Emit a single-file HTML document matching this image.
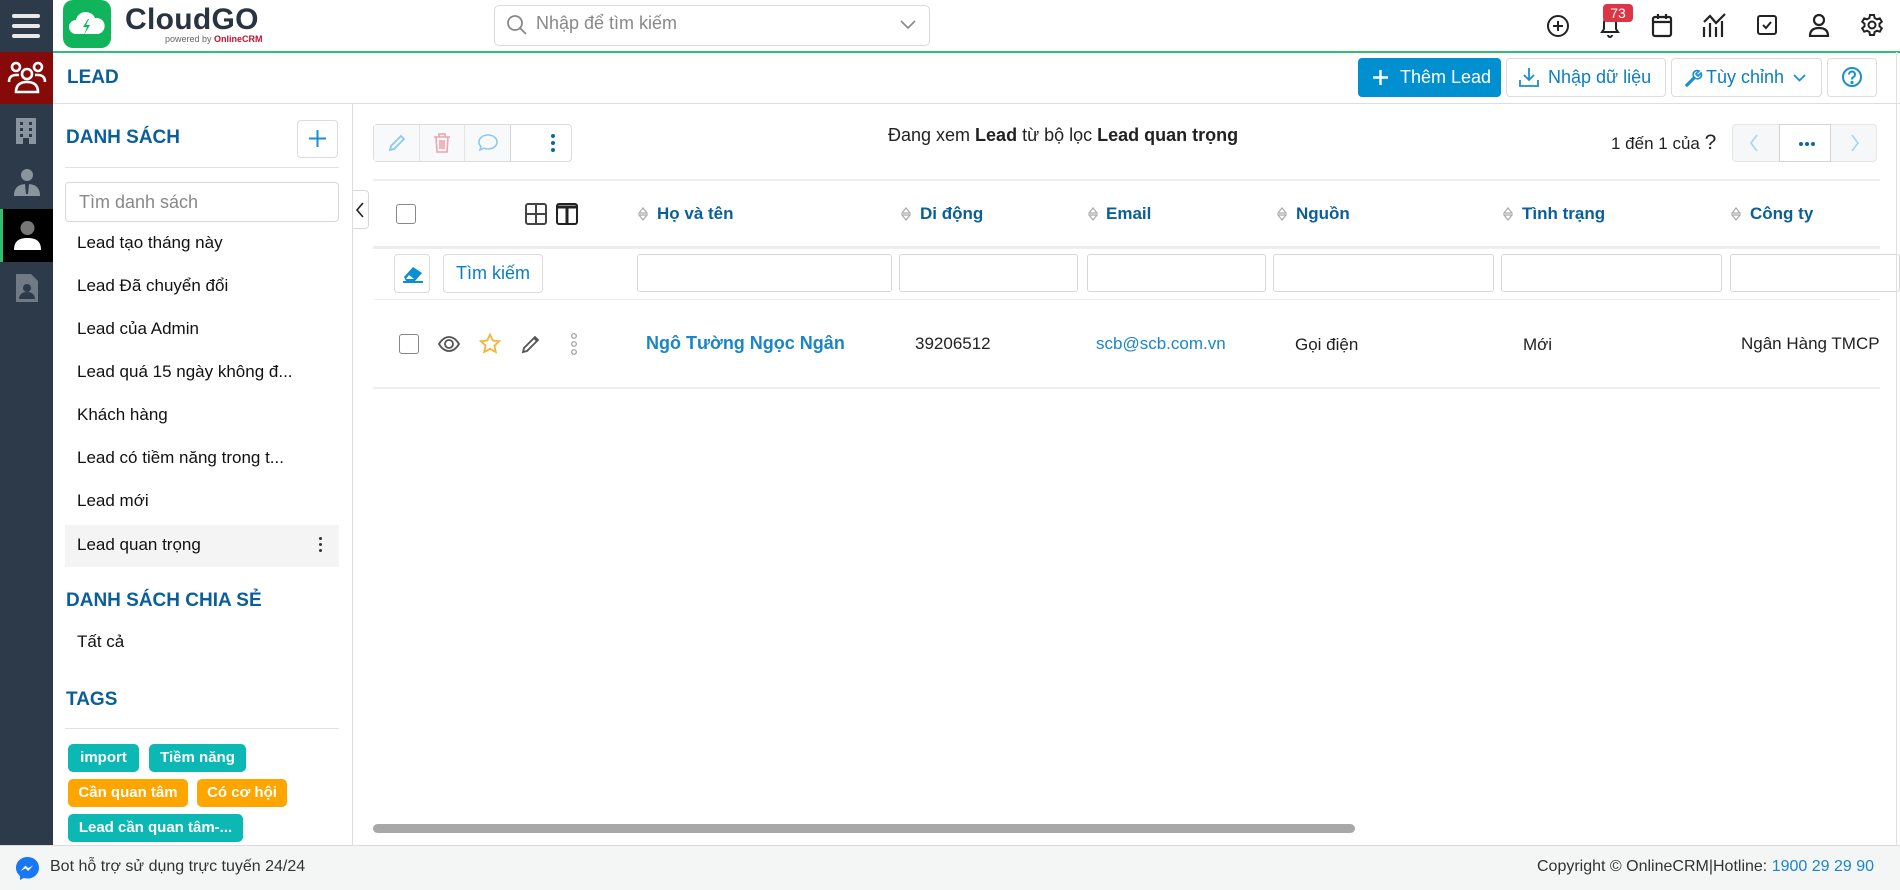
<!DOCTYPE html>
<html><head><meta charset="utf-8"><style>
*{box-sizing:border-box;margin:0;padding:0}
body{width:1900px;height:890px;position:relative;overflow:hidden;background:#fff;font-family:"Liberation Sans","DejaVu Sans",sans-serif;color:#222;font-size:17px}
.a{position:absolute}
.blue{color:#0b6aa2}
.rail{left:0;top:0;width:53px;height:845px;background:#2c3a4a}
.btn{position:absolute;border:1px solid #dcdcdc;border-radius:4px;background:#fff}
.li{position:absolute;left:77px;font-size:17px;color:#111}
.hd{position:absolute;top:204px;font-size:17px;color:#0b5f99;font-weight:bold}
.inp{position:absolute;top:254px;height:38px;border:1px solid #d8d8d8;border-radius:3px}
.tag{position:absolute;height:28px;border-radius:5px;color:#fff;font-weight:bold;font-size:15px;line-height:28px;text-align:center;white-space:nowrap;overflow:hidden}
.hl{position:absolute;height:2px;background:#eceeef}
</style></head><body>
<!-- rail -->
<div class="a rail"></div>
<div class="a" style="left:12px;top:14px;width:28px;height:4px;background:#e8e8e8;border-radius:2px"></div>
<div class="a" style="left:12px;top:24px;width:28px;height:4px;background:#e8e8e8;border-radius:2px"></div>
<div class="a" style="left:12px;top:34px;width:28px;height:4px;background:#e8e8e8;border-radius:2px"></div>
<div class="a" style="left:0;top:52px;width:53px;height:52px;background:#870a0a"></div>
<svg class="a" style="left:7px;top:60px" width="40" height="36" viewBox="0 0 40 36" fill="none" stroke="#fff" stroke-width="2.6"><circle cx="9" cy="7" r="4"/><circle cx="31" cy="7" r="4"/><circle cx="20" cy="14" r="5"/><path d="M2 22c0-5 3-7 7-7h3M38 22c0-5-3-7-7-7h-3M9 32c0-7 4-10 11-10s11 3 11 10z"/></svg>
<svg class="a" style="left:14px;top:116px" width="24" height="28" viewBox="0 0 24 28"><path d="M2 2h20v26h-7v-6h-6v6H2z" fill="#8a949e"/><g fill="#2c3a4a"><rect x="6" y="6" width="3" height="3"/><rect x="15" y="6" width="3" height="3"/><rect x="6" y="12" width="3" height="3"/><rect x="15" y="12" width="3" height="3"/><rect x="6" y="18" width="3" height="3"/><rect x="15" y="18" width="3" height="3"/></g></svg>
<svg class="a" style="left:13px;top:168px" width="28" height="28" viewBox="0 0 28 28"><circle cx="14" cy="7" r="6" fill="#8a949e"/><path d="M1 28c0-9 5-12 13-12s13 3 13 12z" fill="#8a949e"/><path d="M12 16h4l-1 10h-2z" fill="#2c3a4a"/></svg>
<div class="a" style="left:0;top:209px;width:53px;height:53px;background:#000"></div>
<div class="a" style="left:0;top:209px;width:3px;height:53px;background:#2fbf71"></div>
<svg class="a" style="left:14px;top:220px" width="27" height="30" viewBox="0 0 27 30"><circle cx="13.5" cy="8" r="7" fill="#777"/><path d="M0 30c0-9 5-12 13.5-12S27 21 27 30z" fill="#fff"/></svg>
<svg class="a" style="left:16px;top:274px" width="22" height="28" viewBox="0 0 22 28"><path d="M0 0h15l7 7v21H0z" fill="#6f7a85"/><circle cx="11" cy="14" r="4" fill="#2c3a4a"/><path d="M3 25c0-5 4-7 8-7s8 2 8 7z" fill="#2c3a4a"/></svg>

<!-- top bar -->
<div class="a" style="left:53px;top:51px;width:1847px;height:2px;background:#2fbf71"></div>
<div class="a" style="left:63px;top:0;width:48px;height:48px;background:#10b55b;border-radius:10px"></div>
<svg class="a" style="left:68px;top:10px" width="38" height="28" viewBox="0 0 38 28"><path d="M8 24a7 7 0 0 1 0-14 10 10 0 0 1 19-2 8 8 0 0 1 3 16z" fill="#fff"/><path d="M20 9l-5 8h4l-3 8 6-10h-4l3-6z" fill="#10b55b"/></svg>
<div class="a" style="left:125px;top:3px;font-size:30px;font-weight:bold;color:#2a3440;letter-spacing:0.3px">CloudGO</div>
<div class="a" style="left:165px;top:34px;font-size:9px;color:#666">powered by <b style="color:#c8102e">OnlineCRM</b></div>
<div class="a" style="left:494px;top:5px;width:436px;height:41px;border:1px solid #dadada;border-radius:5px"></div>
<svg class="a" style="left:506px;top:14px" width="22" height="22" viewBox="0 0 22 22" fill="none" stroke="#888" stroke-width="1.8"><circle cx="9" cy="9" r="7"/><path d="M14 14l6 6"/></svg>
<div class="a" style="left:536px;top:13px;font-size:18px;color:#888">Nhập để tìm kiếm</div>
<svg class="a" style="left:900px;top:20px" width="16" height="10" viewBox="0 0 16 10" fill="none" stroke="#888" stroke-width="1.6"><path d="M1 1l7 7 7-7"/></svg>
<!-- top icons -->
<svg class="a" style="left:1546px;top:14px" width="24" height="24" viewBox="0 0 24 24" fill="none" stroke="#222" stroke-width="2"><circle cx="12" cy="12" r="10"/><path d="M12 7v10M7 12h10"/></svg>
<svg class="a" style="left:1598px;top:13px" width="24" height="26" viewBox="0 0 24 26" fill="none" stroke="#222" stroke-width="2"><path d="M4 19h16l-2-3v-6a6 6 0 0 0-12 0v6zM10 22a2 2 0 0 0 4 0"/></svg>
<div class="a" style="left:1603px;top:4px;width:30px;height:18px;background:#dc3545;border-radius:4px;color:#fff;font-size:14px;line-height:18px;text-align:center">73</div>
<svg class="a" style="left:1651px;top:13px" width="22" height="25" viewBox="0 0 22 25" fill="none" stroke="#222" stroke-width="2.2"><rect x="2" y="4" width="18" height="19" rx="2"/><path d="M2 9h18M7 1v5M15 1v5"/></svg>
<svg class="a" style="left:1702px;top:12px" width="26" height="26" viewBox="0 0 26 26" fill="none" stroke="#222" stroke-width="2.2"><path d="M2 25V15M8 25V11M14 25V15M20 25V9M2 10l6-6 6 7 9-9"/></svg>
<svg class="a" style="left:1756px;top:14px" width="22" height="22" viewBox="0 0 22 22" fill="none" stroke="#222" stroke-width="2"><rect x="2" y="2" width="18" height="18" rx="2"/><path d="M7 11l3 3 5-6"/></svg>
<svg class="a" style="left:1808px;top:13px" width="22" height="24" viewBox="0 0 22 24" fill="none" stroke="#222" stroke-width="2.2"><circle cx="11" cy="7" r="5"/><path d="M2 23c0-6 4-8 9-8s9 2 9 8z"/></svg>
<svg class="a" style="left:1860px;top:13px" width="24" height="24" viewBox="0 0 24 24" fill="none" stroke="#222" stroke-width="2"><circle cx="12" cy="12" r="3.5"/><path d="M10 2h4l.6 3 2.3 1.3 2.9-1 2 3.4-2.3 2v2.6l2.3 2-2 3.4-2.9-1-2.3 1.3-.6 3h-4l-.6-3-2.3-1.3-2.9 1-2-3.4 2.3-2v-2.6l-2.3-2 2-3.4 2.9 1L9.4 5z"/></svg>

<!-- title row -->
<div class="a blue" style="left:67px;top:67px;font-size:19px;font-weight:bold;color:#0b5f99">LEAD</div>
<div class="a" style="left:1358px;top:58px;width:143px;height:39px;background:#0090d0;border-radius:4px;color:#fff;font-size:18px;line-height:39px;padding-left:42px">Thêm Lead</div>
<svg class="a" style="left:1372px;top:69px" width="17" height="17" viewBox="0 0 17 17" stroke="#fff" stroke-width="2.4"><path d="M8.5 1v15M1 8.5h15"/></svg>
<div class="btn" style="left:1506px;top:58px;width:160px;height:39px;color:#0b7ec0;font-size:18px;line-height:37px;padding-left:41px">Nhập dữ liệu</div>
<svg class="a" style="left:1519px;top:67px" width="20" height="20" viewBox="0 0 20 20" fill="none" stroke="#1a8fd0" stroke-width="1.8"><path d="M10 1v11M5 8l5 5 5-5M1 13v6h18v-6"/></svg>
<div class="btn" style="left:1671px;top:58px;width:151px;height:39px;color:#0b7ec0;font-size:18px;line-height:37px;padding-left:34px">Tùy chỉnh</div>
<svg class="a" style="left:1684px;top:67px" width="20" height="20" viewBox="0 0 20 20" fill="none" stroke="#1a8fd0" stroke-width="1.7"><path d="M2 18l8-8a4 4 0 0 1 5-6l-3 3 2 2 3-3a4 4 0 0 1-6 5l-8 8z"/></svg>
<svg class="a" style="left:1793px;top:74px" width="13" height="8" viewBox="0 0 13 8" fill="none" stroke="#1a8fd0" stroke-width="1.7"><path d="M1 1l5.5 5.5L12 1"/></svg>
<div class="btn" style="left:1827px;top:58px;width:50px;height:39px"></div>
<svg class="a" style="left:1841px;top:66px" width="22" height="22" viewBox="0 0 22 22" fill="none" stroke="#1a8fd0" stroke-width="2"><circle cx="11" cy="11" r="9"/><path d="M8 8.5a3 3 0 1 1 4 2.8c-1 .4-1 1-1 2.2"/><circle cx="11" cy="16.5" r=".6" fill="#1a8fd0"/></svg>
<div class="a" style="left:53px;top:103px;width:1847px;height:1px;background:#dedede"></div>

<!-- left panel -->
<div class="a" style="left:352px;top:104px;width:1px;height:741px;background:#dcdcdc"></div>
<div class="a" style="left:66px;top:127px;font-size:19px;font-weight:bold;color:#0b5f99">DANH SÁCH</div>
<div class="btn" style="left:297px;top:120px;width:41px;height:38px"></div>
<svg class="a" style="left:308px;top:129px" width="19" height="19" viewBox="0 0 19 19" stroke="#1a8fd0" stroke-width="2"><path d="M9.5 1v17M1 9.5h17"/></svg>
<div class="a" style="left:65px;top:167px;width:274px;height:1px;background:#e2e2e2"></div>
<div class="a" style="left:65px;top:182px;width:274px;height:40px;border:1px solid #d8d8d8;border-radius:4px;font-size:18px;color:#888;padding:9px 13px">Tìm danh sách</div>
<div class="li" style="top:233px">Lead tạo tháng này</div>
<div class="li" style="top:276px">Lead Đã chuyển đổi</div>
<div class="li" style="top:319px">Lead của Admin</div>
<div class="li" style="top:362px">Lead quá 15 ngày không đ...</div>
<div class="li" style="top:405px">Khách hàng</div>
<div class="li" style="top:448px">Lead có tiềm năng trong t...</div>
<div class="li" style="top:491px">Lead mới</div>
<div class="a" style="left:65px;top:525px;width:274px;height:42px;background:#f4f4f4"></div>
<div class="li" style="top:535px">Lead quan trọng</div>
<div class="a" style="left:319px;top:537px;width:3px;height:3px;background:#333;border-radius:2px;box-shadow:0 6px 0 #333,0 12px 0 #333"></div>
<div class="a" style="left:66px;top:590px;font-size:19px;font-weight:bold;color:#0b5f99">DANH SÁCH CHIA SẺ</div>
<div class="li" style="top:632px">Tất cả</div>
<div class="a" style="left:66px;top:689px;font-size:19px;font-weight:bold;color:#0b5f99">TAGS</div>
<div class="a" style="left:65px;top:728px;width:274px;height:1px;background:#e2e2e2"></div>
<div class="tag" style="left:68px;top:744px;width:71px;background:#0bb8b4">import</div>
<div class="tag" style="left:149px;top:744px;width:97px;background:#0bb8b4">Tiềm năng</div>
<div class="tag" style="left:68px;top:779px;width:120px;background:#ffa500">Cần quan tâm</div>
<div class="tag" style="left:197px;top:779px;width:90px;background:#ffa500">Có cơ hội</div>
<div class="tag" style="left:68px;top:814px;width:175px;background:#0bb8b4">Lead cần quan tâm-...</div>

<!-- toggle -->
<div class="a" style="left:353px;top:190px;width:16px;height:39px;border:1px solid #d8d8d8;border-left:none;border-radius:0 4px 4px 0;background:#fff"></div>
<svg class="a" style="left:355px;top:202px" width="10" height="16" viewBox="0 0 10 16" fill="none" stroke="#222" stroke-width="1.6"><path d="M8 1L2 8l6 7"/></svg>

<!-- toolbar -->
<div class="btn" style="left:373px;top:124px;width:199px;height:38px;background:#fff"></div>
<div class="a" style="left:374px;top:125px;width:136px;height:36px;background:#f8f9fa"></div>
<div class="a" style="left:419px;top:125px;width:1px;height:36px;background:#e4e4e4"></div>
<div class="a" style="left:464px;top:125px;width:1px;height:36px;background:#e4e4e4"></div>
<div class="a" style="left:510px;top:125px;width:1px;height:36px;background:#d4d4d4"></div>
<svg class="a" style="left:387px;top:133px" width="20" height="20" viewBox="0 0 20 20" fill="none" stroke="#8cc9ec" stroke-width="1.8"><path d="M3 17l1-4 10-10 3 3-10 10z"/></svg>
<svg class="a" style="left:433px;top:133px" width="18" height="20" viewBox="0 0 18 20" fill="none" stroke="#f0a3ab" stroke-width="1.6"><path d="M1 4h16M6 4V1h6v3M3 4l1 15h10l1-15M7 7v9M9 7v9M11 7v9"/></svg>
<svg class="a" style="left:477px;top:133px" width="22" height="20" viewBox="0 0 22 20" fill="none" stroke="#8cc9ec" stroke-width="1.6"><path d="M11 2c5 0 9 3 9 7s-4 7-9 7c-1.5 0-3-.3-4-.8L3 17l1-3.5C2.7 12.3 2 10.7 2 9c0-4 4-7 9-7z"/></svg>
<div class="a" style="left:551px;top:134px;width:4px;height:4px;background:#0b6aa2;border-radius:2px;box-shadow:0 7px 0 #0b6aa2,0 14px 0 #0b6aa2"></div>

<div class="a" style="left:888px;top:125px;font-size:18px;color:#222">Đang xem <b>Lead</b> từ bộ lọc <b>Lead quan trọng</b></div>
<div class="a" style="left:1611px;top:131px;font-size:17px;color:#222">1 đến 1 của <span style="font-size:21px">?</span></div>
<div class="a" style="left:1732px;top:124px;width:145px;height:38px;border:1px solid #e6e6e6;border-radius:4px;background:#f6f7f8"></div>
<div class="a" style="left:1779px;top:124px;width:52px;height:38px;border:1px solid #d4d4d4;background:#fff"></div>
<svg class="a" style="left:1749px;top:134px" width="10" height="18" viewBox="0 0 10 18" fill="none" stroke="#a9d4ef" stroke-width="1.6"><path d="M8 1L2 9l6 8"/></svg>
<svg class="a" style="left:1850px;top:134px" width="10" height="18" viewBox="0 0 10 18" fill="none" stroke="#a9d4ef" stroke-width="1.6"><path d="M2 1l6 8-6 8"/></svg>
<div class="a" style="left:1799px;top:142px;width:4px;height:4px;background:#0b6aa2;border-radius:2px;box-shadow:6px 0 0 #0b6aa2,12px 0 0 #0b6aa2"></div>

<!-- table -->
<div class="hl" style="left:373px;top:179px;width:1507px"></div>
<div class="a" style="left:396px;top:204px;width:20px;height:20px;border:1.5px solid #888;border-radius:3px"></div>
<svg class="a" style="left:525px;top:203px" width="22" height="22" viewBox="0 0 22 22" fill="none" stroke="#444" stroke-width="2"><rect x="1" y="1" width="20" height="20" rx="2"/><path d="M11 1v20M1 11h20"/></svg>
<svg class="a" style="left:556px;top:203px" width="22" height="22" viewBox="0 0 22 22" fill="none" stroke="#222" stroke-width="2"><rect x="1" y="1" width="20" height="20" rx="2"/><path d="M11 4v17M1 4h20" stroke-width="3"/></svg>
<div class="hd" style="left:657px">Họ và tên</div>
<div class="hd" style="left:920px">Di động</div>
<div class="hd" style="left:1106px">Email</div>
<div class="hd" style="left:1296px">Nguồn</div>
<div class="hd" style="left:1522px">Tình trạng</div>
<div class="hd" style="left:1750px">Công ty</div>
<svg class="a" style="left:638px;top:206px" width="10" height="16" viewBox="0 0 10 16" fill="none" stroke="#aaa" stroke-width="1.2"><path d="M1 7l4-5 4 5zM1 9l4 5 4-5z"/></svg>
<svg class="a" style="left:901px;top:206px" width="10" height="16" viewBox="0 0 10 16" fill="none" stroke="#aaa" stroke-width="1.2"><path d="M1 7l4-5 4 5zM1 9l4 5 4-5z"/></svg>
<svg class="a" style="left:1088px;top:206px" width="10" height="16" viewBox="0 0 10 16" fill="none" stroke="#aaa" stroke-width="1.2"><path d="M1 7l4-5 4 5zM1 9l4 5 4-5z"/></svg>
<svg class="a" style="left:1277px;top:206px" width="10" height="16" viewBox="0 0 10 16" fill="none" stroke="#aaa" stroke-width="1.2"><path d="M1 7l4-5 4 5zM1 9l4 5 4-5z"/></svg>
<svg class="a" style="left:1503px;top:206px" width="10" height="16" viewBox="0 0 10 16" fill="none" stroke="#aaa" stroke-width="1.2"><path d="M1 7l4-5 4 5zM1 9l4 5 4-5z"/></svg>
<svg class="a" style="left:1731px;top:206px" width="10" height="16" viewBox="0 0 10 16" fill="none" stroke="#aaa" stroke-width="1.2"><path d="M1 7l4-5 4 5zM1 9l4 5 4-5z"/></svg>
<div class="hl" style="left:373px;top:246px;width:1507px;height:3px"></div>
<div class="btn" style="left:394px;top:254px;width:36px;height:39px"></div>
<svg class="a" style="left:402px;top:263px" width="22" height="20" viewBox="0 0 22 20"><path d="M2 14l9-10 9 6-7 8H4z" fill="#0a8fd0"/><path d="M4 16l3-4 5 4" fill="#fff"/><path d="M1 19h20" stroke="#0a8fd0" stroke-width="2"/></svg>
<div class="btn" style="left:443px;top:254px;width:100px;height:39px;color:#0b7ec0;font-size:18px;line-height:37px;text-align:center">Tìm kiếm</div>
<div class="inp" style="left:637px;width:255px"></div>
<div class="inp" style="left:899px;width:179px"></div>
<div class="inp" style="left:1087px;width:179px"></div>
<div class="inp" style="left:1273px;width:221px"></div>
<div class="inp" style="left:1501px;width:221px"></div>
<div class="inp" style="left:1730px;width:170px"></div>
<div class="hl" style="left:373px;top:299px;width:1507px;height:1px"></div>
<!-- row -->
<div class="a" style="left:399px;top:334px;width:20px;height:20px;border:1.5px solid #888;border-radius:3px"></div>
<svg class="a" style="left:438px;top:335px" width="22" height="18" viewBox="0 0 22 18" fill="none" stroke="#555" stroke-width="1.8"><path d="M1 9c3-5 6-7 10-7s7 2 10 7c-3 5-6 7-10 7S4 14 1 9z"/><circle cx="11" cy="9" r="4"/></svg>
<svg class="a" style="left:479px;top:333px" width="22" height="22" viewBox="0 0 22 22" fill="none" stroke="#f5b436" stroke-width="1.8"><path d="M11 1.5l2.8 6 6.5.7-4.9 4.4 1.4 6.4L11 15.8l-5.8 3.2 1.4-6.4L1.7 8.2l6.5-.7z"/></svg>
<svg class="a" style="left:521px;top:334px" width="20" height="20" viewBox="0 0 20 20" fill="none" stroke="#555" stroke-width="1.8"><path d="M2 18l1-4 11-11 3 3-11 11zM13 4l3 3"/></svg>
<svg class="a" style="left:570px;top:333px" width="8" height="22" viewBox="0 0 8 22" fill="none" stroke="#999" stroke-width="1.2"><circle cx="4" cy="3" r="2.3"/><circle cx="4" cy="11" r="2.3"/><circle cx="4" cy="19" r="2.3"/></svg>
<div class="a" style="left:646px;top:333px;font-size:18px;font-weight:bold;color:#1a85c8">Ngô Tường Ngọc Ngân</div>
<div class="a" style="left:915px;top:334px;font-size:17px">39206512</div>
<div class="a" style="left:1096px;top:334px;font-size:17px;color:#1a85c8">scb@scb.com.vn</div>
<div class="a" style="left:1295px;top:335px;font-size:17px">Gọi điện</div>
<div class="a" style="left:1523px;top:335px;font-size:17px">Mới</div>
<div class="a" style="left:1741px;top:334px;font-size:17px">Ngân Hàng TMCP</div>
<div class="hl" style="left:373px;top:387px;width:1507px"></div>
<div class="a" style="left:1896px;top:52px;width:1px;height:793px;background:#e0e0e0"></div>
<!-- scrollbar -->
<div class="a" style="left:373px;top:824px;width:982px;height:9px;background:#a8a8a8;border-radius:5px"></div>

<!-- footer -->
<div class="a" style="left:0;top:845px;width:1900px;height:45px;background:#f4f6f6;border-top:1px solid #dcdcdc"></div>
<svg class="a" style="left:15px;top:856px" width="25" height="25" viewBox="0 0 25 25"><path d="M12.5 1C6 1 1 5.8 1 11.8c0 3.3 1.5 6.2 4 8.2V24l3.7-2c1.2.3 2.5.5 3.8.5 6.5 0 11.5-4.8 11.5-10.8S19 1 12.5 1z" fill="#1877f2"/><path d="M5.5 15l5-5.5 2.6 2.6 5-2.6-5 5.5-2.6-2.6z" fill="#fff"/></svg>
<div class="a" style="left:50px;top:858px;font-size:16px;color:#333">Bot hỗ trợ sử dụng trực tuyến 24/24</div>
<div class="a" style="left:1537px;top:858px;font-size:16px;color:#333">Copyright © OnlineCRM|Hotline: <span style="color:#1a85c8">1900 29 29 90</span></div>
</body></html>
